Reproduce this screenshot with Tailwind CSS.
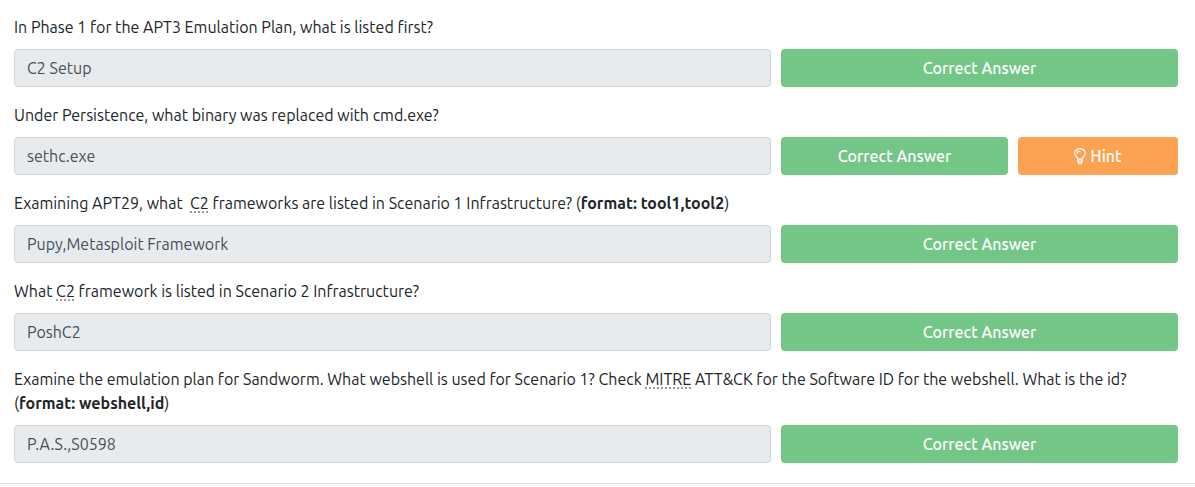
<!DOCTYPE html>
<html lang="en">
<head>
<meta charset="utf-8">
<meta name="viewport" content="width=device-width, initial-scale=1">
<title>Questions</title>
<script src="https://cdn.jsdelivr.net/npm/@tailwindcss/browser@4"></script>
</head>
<body class="min-h-screen bg-[#fafafa] font-[Ubuntu,'Noto_Sans',sans-serif] text-base text-[#212529]">
<main class="flex flex-col gap-4 border-b border-[#dee2e6] bg-white pt-[15px] pr-[17px] pb-5 pl-[14px]">
  <div class="flex flex-col gap-[10px]">
    <label for="q1">In Phase 1 for the APT3 Emulation Plan, what is listed first?</label>
    <div class="grid grid-cols-[757fr_397fr] gap-[10px]">
      <input id="q1" type="text" readonly value="C2 Setup" class="h-[38px] min-w-0 rounded border border-[#ced4da] bg-[#e7ebee] px-3 text-[#495057]">
      <button type="button" class="h-[38px] rounded bg-[#74c687] font-medium text-white">Correct Answer</button>
    </div>
  </div>
  <div class="flex flex-col gap-[10px]">
    <label for="q2">Under Persistence, what binary was replaced with cmd.exe?</label>
    <div class="grid grid-cols-[757fr_397fr] gap-[10px]">
      <input id="q2" type="text" readonly value="sethc.exe" class="h-[38px] min-w-0 rounded border border-[#ced4da] bg-[#e7ebee] px-3 text-[#495057]">
      <div class="grid grid-cols-[227fr_160fr] gap-[10px]">
        <button type="button" class="h-[38px] rounded bg-[#74c687] font-medium text-white">Correct Answer</button>
        <button type="button" class="flex h-[38px] items-center justify-center gap-1 rounded bg-[#fca253] font-medium text-white">
          <svg class="h-4 w-3" viewBox="0 0 12 16" fill="none" stroke="currentColor" stroke-width="1.2" stroke-linecap="round" stroke-linejoin="round" aria-hidden="true"><path d="M3.900 11.200C3.900 9 .7 8.300 .7 5.300A5.300 4.700 0 0 1 11.300 5.300C11.300 8.300 8.100 9 8.100 11.200ZM3.900 11.200V14L4.800 15.300H7.200L8.100 14V11.200M3.900 13.200H8.100M3.200 5.300C3.200 4 4.300 3 6 3"/></svg>
          Hint
        </button>
      </div>
    </div>
  </div>
  <div class="flex flex-col gap-[10px]">
    <label for="q3">Examining APT29, what &nbsp;<abbr title="Command and Control" class="underline decoration-[#999c9f] decoration-dotted decoration-2 underline-offset-2 [text-decoration-skip-ink:none]">C2</abbr> frameworks are listed in Scenario 1 Infrastructure? (<strong class="font-bold">format: tool1,tool2</strong>)</label>
    <div class="grid grid-cols-[757fr_397fr] gap-[10px]">
      <input id="q3" type="text" readonly value="Pupy,Metasploit Framework" class="h-[38px] min-w-0 rounded border border-[#ced4da] bg-[#e7ebee] px-3 text-[#495057]">
      <button type="button" class="h-[38px] rounded bg-[#74c687] font-medium text-white">Correct Answer</button>
    </div>
  </div>
  <div class="flex flex-col gap-[10px]">
    <label for="q4">What <abbr title="Command and Control" class="underline decoration-[#999c9f] decoration-dotted decoration-2 underline-offset-2 [text-decoration-skip-ink:none]">C2</abbr> framework is listed in Scenario 2 Infrastructure?</label>
    <div class="grid grid-cols-[757fr_397fr] gap-[10px]">
      <input id="q4" type="text" readonly value="PoshC2" class="h-[38px] min-w-0 rounded border border-[#ced4da] bg-[#e7ebee] px-3 text-[#495057]">
      <button type="button" class="h-[38px] rounded bg-[#74c687] font-medium text-white">Correct Answer</button>
    </div>
  </div>
  <div class="flex flex-col gap-[10px]">
    <label for="q5">Examine the emulation plan for Sandworm. What webshell is used for Scenario 1? Check <abbr title="MITRE" class="underline decoration-[#999c9f] decoration-dotted decoration-2 underline-offset-2 [text-decoration-skip-ink:none]">MITRE</abbr> ATT&amp;CK for the Software ID for the webshell. What is the id?<br>(<strong class="font-bold">format: webshell,id</strong>)</label>
    <div class="grid grid-cols-[757fr_397fr] gap-[10px]">
      <input id="q5" type="text" readonly value="P.A.S.,S0598" class="h-[38px] min-w-0 rounded border border-[#ced4da] bg-[#e7ebee] px-3 text-[#495057]">
      <button type="button" class="h-[38px] rounded bg-[#74c687] font-medium text-white">Correct Answer</button>
    </div>
  </div>
</main>
</body>
</html>
